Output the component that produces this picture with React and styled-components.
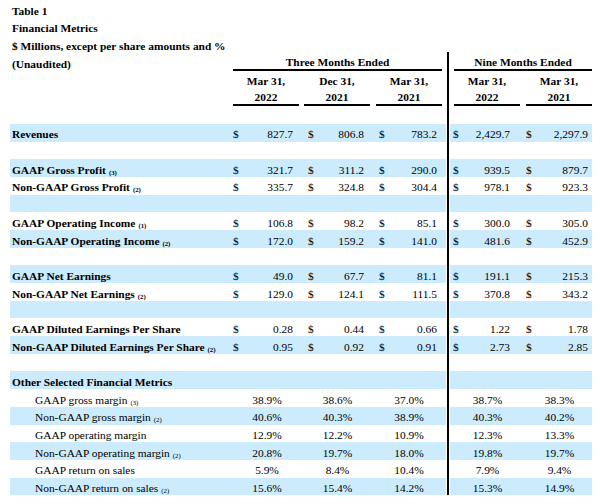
import React from "react";
import styled, { createGlobalStyle } from "styled-components";

const GlobalStyle = createGlobalStyle`
  html, body { margin: 0; padding: 0; background: #ffffff; }
  body { font-family: "Liberation Serif", "Times New Roman", serif; color: #000; }
`;

const Page = styled.div`
  padding-left: 10px;
  width: 582px;
`;

const Table = styled.div`
  position: relative;
  width: 582px;
`;

const Divider = styled.div`
  position: absolute;
  left: 436px;
  top: 52px;
  bottom: 0;
  width: 2px;
  background: #000;
  border-left: 1px solid #fff;
  border-right: 1px solid #fff;
`;

const Row = styled.div`
  display: grid;
  grid-template-columns: 223px 66px 5px 66px 6px 66px 12px 66px 6px 66px;
  grid-template-rows: 17.7px;
  height: 17.7px;
  align-items: start;
  background: ${(p) => (p.$shaded ? "#ccecfd" : "transparent")};
  font-size: 11.4px;
  line-height: 17.7px;
`;

const Cell = styled.div`
  padding-top: 2.6px;
  white-space: nowrap;
`;

const Label = styled(Cell)`
  grid-column: 1 / 2;
  padding-left: ${(p) => (p.$indent ? 25 : 2)}px;
  font-weight: ${(p) => (p.$bold ? 700 : 400)};
`;

const Note = styled.span`
  font-size: 6.8px;
  line-height: 0;
  vertical-align: -1px;
  margin-left: 3px;
`;

const HeadSpan = styled.div`
  grid-column: ${(p) => p.$col};
  font-weight: 700;
  white-space: nowrap;
  height: 17.7px;
  box-sizing: border-box;
  display: flex;
  align-items: flex-end;
  justify-content: center;
  line-height: 14px;
  border-bottom: ${(p) => (p.$rule ? "2px solid #000" : "none")};
  margin-bottom: ${(p) => (p.$rule ? "-1px" : "0")};
`;

const Money = styled(Cell)`
  grid-column: ${(p) => p.$col};
  display: flex;
  justify-content: space-between;
  padding-left: ${(p) => Math.max(p.$dl, 0)}px;
  padding-right: ${(p) => p.$vr}px;
  margin-left: ${(p) => (p.$dl < 0 ? p.$dl : 0)}px;
`;

const Pct = styled(Cell)`
  grid-column: ${(p) => p.$col};
  text-align: center;
  padding-left: ${(p) => p.$shift}px;
`;

const cols = [
  { col: "2 / 3", dl: 0, vr: 6, shift: 2 },
  { col: "4 / 5", dl: 4, vr: 6, shift: 1 },
  { col: "6 / 7", dl: 3, vr: 5, shift: 0 },
  { col: "8 / 9", dl: -1, vr: 10, shift: 1 },
  { col: "10 / 11", dl: 0, vr: 4, shift: 1 },
];

const dollarRows = [
  { label: "Revenues", vals: ["827.7", "806.8", "783.2", "2,429.7", "2,297.9"] },
  null,
  { label: "GAAP Gross Profit", fn: "(3)", vals: ["321.7", "311.2", "290.0", "939.5", "879.7"] },
  { label: "Non-GAAP Gross Profit", fn: "(2)", vals: ["335.7", "324.8", "304.4", "978.1", "923.3"] },
  null,
  { label: "GAAP Operating Income", fn: "(1)", vals: ["106.8", "98.2", "85.1", "300.0", "305.0"] },
  { label: "Non-GAAP Operating Income", fn: "(2)", vals: ["172.0", "159.2", "141.0", "481.6", "452.9"] },
  null,
  { label: "GAAP Net Earnings", vals: ["49.0", "67.7", "81.1", "191.1", "215.3"] },
  { label: "Non-GAAP Net Earnings", fn: "(2)", vals: ["129.0", "124.1", "111.5", "370.8", "343.2"] },
  null,
  { label: "GAAP Diluted Earnings Per Share", vals: ["0.28", "0.44", "0.66", "1.22", "1.78"] },
  { label: "Non-GAAP Diluted Earnings Per Share", fn: "(2)", vals: ["0.95", "0.92", "0.91", "2.73", "2.85"] },
  null,
];

const pctRows = [
  { label: "GAAP gross margin", fn: "(3)", vals: ["38.9%", "38.6%", "37.0%", "38.7%", "38.3%"] },
  { label: "Non-GAAP gross margin", fn: "(2)", vals: ["40.6%", "40.3%", "38.9%", "40.3%", "40.2%"] },
  { label: "GAAP operating margin", vals: ["12.9%", "12.2%", "10.9%", "12.3%", "13.3%"] },
  { label: "Non-GAAP operating margin", fn: "(2)", vals: ["20.8%", "19.7%", "18.0%", "19.8%", "19.7%"] },
  { label: "GAAP return on sales", vals: ["5.9%", "8.4%", "10.4%", "7.9%", "9.4%"] },
  { label: "Non-GAAP return on sales", fn: "(2)", vals: ["15.6%", "15.4%", "14.2%", "15.3%", "14.9%"] },
];

const headDates = [
  ["Mar 31,", "2022"],
  ["Dec 31,", "2021"],
  ["Mar 31,", "2021"],
  ["Mar 31,", "2022"],
  ["Mar 31,", "2021"],
];

export default function App() {
  const first = 7;
  return (
    <Page>
      <GlobalStyle />
      <Table>
        <Row><Label $bold>Table 1</Label></Row>
        <Row><Label $bold>Financial Metrics</Label></Row>
        <Row><Label $bold>$ Millions, except per share amounts and %</Label></Row>
        <Row>
          <Label $bold>(Unaudited)</Label>
          <HeadSpan $col="2 / 7" $rule>Three Months Ended</HeadSpan>
          <HeadSpan $col="8 / 11" $rule>Nine Months Ended</HeadSpan>
        </Row>
        <Row>
          {headDates.map((d, i) => (
            <HeadSpan key={i} $col={cols[i].col}>{d[0]}</HeadSpan>
          ))}
        </Row>
        <Row>
          {headDates.map((d, i) => (
            <HeadSpan key={i} $col={cols[i].col} $rule>{d[1]}</HeadSpan>
          ))}
        </Row>
        <Row />
        {dollarRows.map((r, i) => {
          const shaded = (first + i) % 2 === 1;
          if (!r) return <Row key={"d" + i} $shaded={shaded} />;
          return (
            <Row key={"d" + i} $shaded={shaded}>
              <Label $bold>
                {r.label}
                {r.fn && <Note>{r.fn}</Note>}
              </Label>
              {r.vals.map((v, j) => (
                <Money key={j} $col={cols[j].col} $dl={cols[j].dl} $vr={cols[j].vr}>
                  <span>$</span>
                  <span>{v}</span>
                </Money>
              ))}
            </Row>
          );
        })}
        <Row $shaded>
          <Label $bold>Other Selected Financial Metrics</Label>
        </Row>
        {pctRows.map((r, i) => (
          <Row key={"p" + i} $shaded={i % 2 === 1}>
            <Label $indent>
              {r.label}
              {r.fn && <Note>{r.fn}</Note>}
            </Label>
            {r.vals.map((v, j) => (
              <Pct key={j} $col={cols[j].col} $shift={cols[j].shift}>{v}</Pct>
            ))}
          </Row>
        ))}
        <Divider />
      </Table>
    </Page>
  );
}
